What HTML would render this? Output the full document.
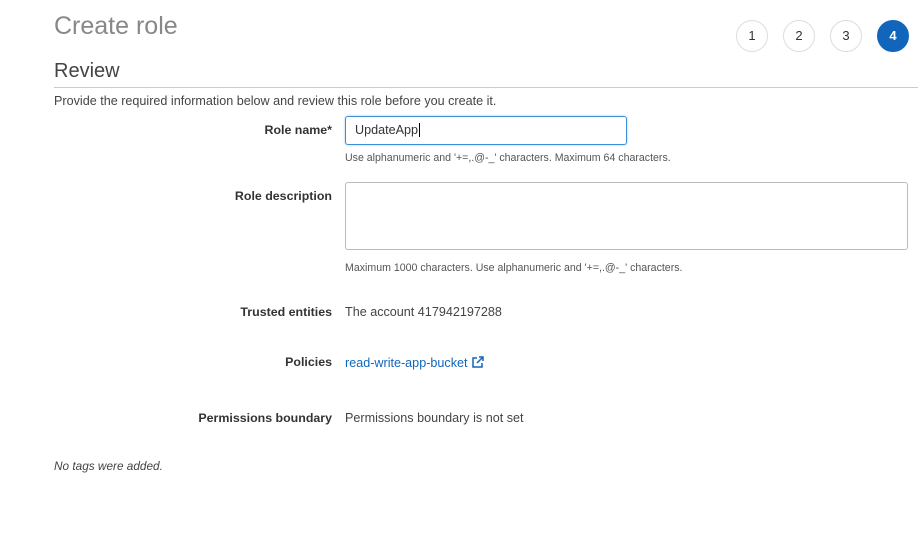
<!DOCTYPE html>
<html><head><style>
body{margin:0;width:922px;height:556px;background:#fff;font-family:"Liberation Sans",Arial,sans-serif;color:#444;position:relative;overflow:hidden}
.a{position:absolute;white-space:nowrap}
.c{position:absolute;top:20px;width:30px;height:30px;border:1px solid #ddd;border-radius:50%;text-align:center;line-height:30px;font-size:13px;color:#333}
.l{right:590px;font-weight:bold;font-size:12.4px;color:#333}
.h{font-size:10.6px;color:#555}
.t{font-size:12.6px}
</style></head><body>
<div class="a" style="left:54px;top:12px;font-size:25px;color:#888">Create role</div>
<div class="c" style="left:736px">1</div>
<div class="c" style="left:783px">2</div>
<div class="c" style="left:830px">3</div>
<div class="c" style="left:877px;background:#1166bb;border-color:#1166bb;color:#fff;font-weight:bold">4</div>
<div class="a" style="left:54px;top:60px;font-size:20px;color:#444">Review</div>
<div class="a" style="left:54px;top:87px;width:864px;border-top:1px solid #ccc"></div>
<div class="a t" style="left:54px;top:94px;color:#444">Provide the required information below and review this role before you create it.</div>
<div class="a l" style="top:123px">Role name*</div>
<div class="a" style="left:345px;top:116px;width:280px;height:27px;border:1px solid #3f8fd8;border-radius:3px;box-shadow:0 0 2px #9cc3ea"></div>
<div class="a t" style="left:355px;top:123px;color:#333">UpdateApp<span style="border-left:1px solid #000;margin-left:1px"></span></div>
<div class="a h" style="left:345px;top:152px">Use alphanumeric and '+=,.@-_' characters. Maximum 64 characters.</div>
<div class="a l" style="top:189px">Role description</div>
<div class="a" style="left:345px;top:182px;width:561px;height:66px;border:1px solid #bbb;border-radius:3px"></div>
<div class="a h" style="left:345px;top:262px">Maximum 1000 characters. Use alphanumeric and '+=,.@-_' characters.</div>
<div class="a l" style="top:305px">Trusted entities</div>
<div class="a t" style="left:345px;top:305px;color:#444">The account 417942197288</div>
<div class="a l" style="top:355px">Policies</div>
<div class="a t" style="left:345px;top:356px;color:#1166bb">read-write-app-bucket <svg width="13" height="13" viewBox="0 0 13 13" style="vertical-align:-2px"><path d="M6 2H2v9h9V7" fill="none" stroke="#1166bb" stroke-width="1.5"/><path d="M8 1h4v4M12 1L6 7" fill="none" stroke="#1166bb" stroke-width="1.5"/></svg></div>
<div class="a l" style="top:411px">Permissions boundary</div>
<div class="a t" style="left:345px;top:411px;color:#444">Permissions boundary is not set</div>
<div class="a" style="left:54px;top:459px;font-size:11.8px;font-style:italic;color:#444">No tags were added.</div>
</body></html>
